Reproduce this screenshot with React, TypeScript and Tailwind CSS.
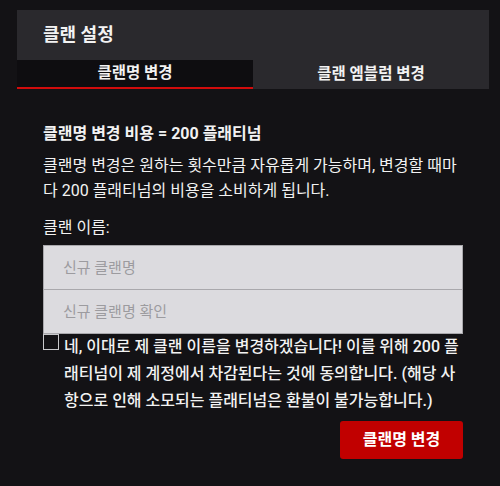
import React from "react";

export default function App() {
  const font = { fontFamily: 'Roboto, "Noto Sans CJK KR", sans-serif' };
  return (
    <div className="min-h-screen w-full bg-[#131215] text-[#f2f2f2]" style={font}>
      <div className="pt-[10px] pl-[17px]">
        <div className="w-[472px]">
          <div className="h-[50px] bg-[#2a292d] pl-[26px] flex items-center">
            <span className="text-[18px] font-bold leading-none">클랜 설정</span>
          </div>
          <div className="flex h-[29px]">
            <div className="w-[236px] bg-[#0e0d10] border-b-2 border-[#d10c0c] flex items-center justify-center">
              <span className="text-[15.5px] font-bold leading-none">클랜명 변경</span>
            </div>
            <div className="flex-1 bg-[#2a292d] flex items-center justify-center">
              <span className="text-[15.5px] font-bold leading-none">클랜 엠블럼 변경</span>
            </div>
          </div>
          <div className="px-[26px] pt-[32px]">
            <div className="text-[16px] font-bold leading-[25px]">클랜명 변경 비용 = 200 플래티넘</div>
            <p className="mt-[7px] w-[424px] text-[16px] leading-[25px]">
              클랜명 변경은 원하는 횟수만큼 자유롭게 가능하며, 변경할 때마다 200 플래티넘의 비용을 소비하게 됩니다.
            </p>
            <div className="mt-[12px] text-[16px] leading-[25px]">클랜 이름:</div>
            <div className="mt-[5px] w-[420px]">
              <input
                className="block w-full h-[45px] bg-[#dcdbdf] border border-[#a9a8ac] pl-[19px] text-[15px] text-[#333] placeholder:text-[#9c9b9f] outline-none"
                style={font}
                placeholder="신규 클랜명"
              />
              <input
                className="block w-full h-[44px] bg-[#dcdbdf] border border-t-0 border-[#a9a8ac] pl-[19px] text-[15px] text-[#333] placeholder:text-[#9c9b9f] outline-none"
                style={font}
                placeholder="신규 클랜명 확인"
              />
            </div>
            <div className="flex items-start w-[420px]">
              <div className="w-[16px] h-[16px] shrink-0 border-[1.5px] border-[#c9c9cc] bg-[#131215]" />
              <p className="ml-[5px] -mt-[1px] text-[16px] font-medium leading-[27px]">
                네, 이대로 제 클랜 이름을 변경하겠습니다! 이를 위해 200 플래티넘이 제 계정에서 차감된다는 것에 동의합니다. (해당 사항으로 인해 소모되는 플래티넘은 환불이 불가능합니다.)
              </p>
            </div>
            <div className="flex justify-end mt-[7px] w-[420px]">
              <button className="w-[123px] h-[38px] rounded-[3px] bg-[#c10000] text-[16px] font-bold text-white" style={font}>
                클랜명 변경
              </button>
            </div>
          </div>
        </div>
      </div>
    </div>
  );
}
